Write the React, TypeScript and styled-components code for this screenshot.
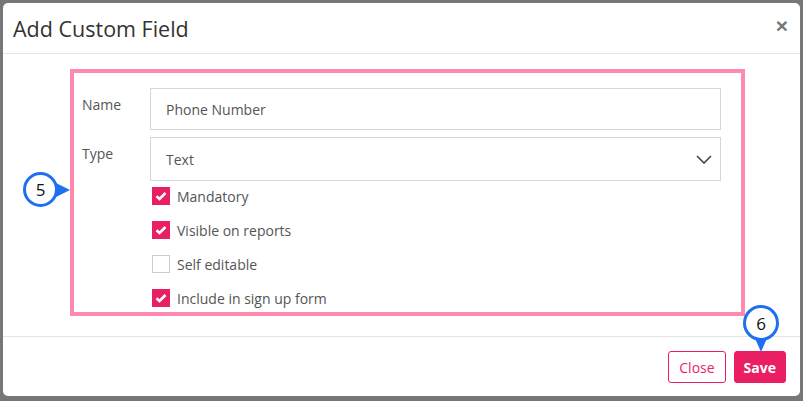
import React from 'react';
import styled, {createGlobalStyle} from 'styled-components';

const GlobalStyle = createGlobalStyle`
    html, body {
        margin: 0;
        padding: 0;
        background: #777777;
        font-family: "Open Sans", "Liberation Sans", sans-serif;
    }
    #root {
        height: 401px;
        padding: 3px 3px 5px 3px;
        box-sizing: border-box;
    }
`;

const Modal = styled.div`
    position: relative;
    height: 100%;
    background: #ffffff;
    border-radius: 5px;
    display: flex;
    flex-direction: column;
`;

const Header = styled.div`
    height: 50px;
    border-bottom: 1px solid #e5e5e5;
    display: flex;
    align-items: center;
    justify-content: space-between;
    padding: 0 12px 0 10px;
    flex-shrink: 0;
`;

const Title = styled.h4`
    margin: 0;
    font-size: 21.5px;
    font-weight: 500;
    color: #333333;
    padding-top: 1px;
`;

const CloseX = styled.button`
    border: none;
    background: none;
    padding: 0;
    font-size: 21px;
    font-weight: 700;
    color: #777777;
    line-height: 1;
    margin-top: -6px;
    font-family: "Liberation Sans", sans-serif;
`;

const Body = styled.div`
    flex: 1;
    padding: 15px 0 20px 67px;
`;

const Highlight = styled.div`
    width: 675px;
    height: 247px;
    box-sizing: border-box;
    border: 4px solid #ff8aad;
    padding: 15px 20px 0 8px;
`;

const FieldRow = styled.div`
    display: grid;
    grid-template-columns: 68px 1fr;
    margin-bottom: 7px;
`;

const Label = styled.label`
    font-size: 14px;
    color: #555555;
    padding-top: 7px;
`;

const Input = styled.div<{$tall?: boolean}>`
    height: ${p => (p.$tall ? 44 : 42)}px;
    box-sizing: border-box;
    border: 1px solid #d6d6d6;
    display: flex;
    align-items: center;
    justify-content: space-between;
    padding: 0 8px 0 15px;
    font-size: 14px;
    color: #555555;
`;

const Checks = styled.div`
    display: flex;
    flex-direction: column;
    gap: 16px;
    padding-left: 70px;
    margin-top: -1px;
`;

const CheckRow = styled.div`
    display: flex;
    align-items: center;
    gap: 7px;
    height: 18px;
    font-size: 14px;
    color: #555555;
`;

const Box = styled.span<{$on: boolean}>`
    width: 18px;
    height: 18px;
    box-sizing: border-box;
    background: ${p => (p.$on ? '#e91e63' : '#ffffff')};
    border: 1px solid ${p => (p.$on ? '#e91e63' : '#cccccc')};
    display: flex;
    align-items: center;
    justify-content: center;
`;

const Footer = styled.div`
    border-top: 1px solid #e5e5e5;
    display: flex;
    justify-content: flex-end;
    gap: 8px;
    padding: 14px 14px 0 0;
    height: 60px;
    box-sizing: border-box;
    flex-shrink: 0;
`;

const Button = styled.button<{$primary?: boolean}>`
    height: 32px;
    box-sizing: border-box;
    border-radius: 3px;
    border: 1px solid #e91e63;
    background: ${p => (p.$primary ? '#e91e63' : '#ffffff')};
    color: ${p => (p.$primary ? '#ffffff' : '#e91e63')};
    font-family: "Open Sans", "Liberation Sans", sans-serif;
    font-size: 14px;
    font-weight: ${p => (p.$primary ? 700 : 400)};
    padding: 0 ${p => (p.$primary ? 9 : 10)}px;
`;

const Marker = styled.div<{$x: number; $y: number; $size: number}>`
    position: absolute;
    left: ${p => p.$x}px;
    top: ${p => p.$y}px;
    width: ${p => p.$size}px;
    height: ${p => p.$size}px;
`;

const Badge = styled.div`
    position: absolute;
    inset: 0;
    border-radius: 50%;
    border: 3.5px solid #1e6ff2;
    background: #ffffff;
    box-sizing: border-box;
    display: flex;
    align-items: center;
    justify-content: center;
    font-size: 17px;
    font-weight: 500;
    color: #111111;
`;

const Pointer = styled.svg`
    position: absolute;
    overflow: visible;
`;

const Check = () => (
    <svg width="12" height="10" viewBox="0 0 12 10">
        <path d="M1.5 5.2 L4.5 8 L10.5 2" fill="none" stroke="#ffffff" strokeWidth="2.6" />
    </svg>
);

const items = [
    {label: 'Mandatory', on: true},
    {label: 'Visible on reports', on: true},
    {label: 'Self editable', on: false},
    {label: 'Include in sign up form', on: true},
];

export default function App() {
    return (
        <>
            <GlobalStyle />
            <Modal>
                <Header>
                    <Title>Add Custom Field</Title>
                    <CloseX>×</CloseX>
                </Header>
                <Body>
                    <Highlight>
                        <FieldRow>
                            <Label>Name</Label>
                            <Input>Phone Number</Input>
                        </FieldRow>
                        <FieldRow>
                            <Label>Type</Label>
                            <Input $tall>
                                Text
                                <svg width="16" height="9" viewBox="0 0 16 9">
                                    <path d="M1 1 L8 8 L15 1" fill="none" stroke="#444" strokeWidth="1.6" />
                                </svg>
                            </Input>
                        </FieldRow>
                        <Checks>
                            {items.map(i => (
                                <CheckRow key={i.label}>
                                    <Box $on={i.on}>{i.on && <Check />}</Box>
                                    {i.label}
                                </CheckRow>
                            ))}
                        </Checks>
                    </Highlight>
                </Body>
                <Footer>
                    <Button>Close</Button>
                    <Button $primary>Save</Button>
                </Footer>
                <Marker $x={20} $y={169} $size={35}>
                    <Pointer width="16" height="16" style={{left: 31, top: 9.5}}>
                        <path d="M0 0 L16 8 L0 16 Z" fill="#1e6ff2" />
                    </Pointer>
                    <Badge>5</Badge>
                </Marker>
                <Marker $x={740} $y={302} $size={36}>
                    <Pointer width="14" height="16" style={{left: 11, top: 31}}>
                        <path d="M0 0 L14 0 L7 16 Z" fill="#1e6ff2" />
                    </Pointer>
                    <Badge>6</Badge>
                </Marker>
            </Modal>
        </>
    );
}
